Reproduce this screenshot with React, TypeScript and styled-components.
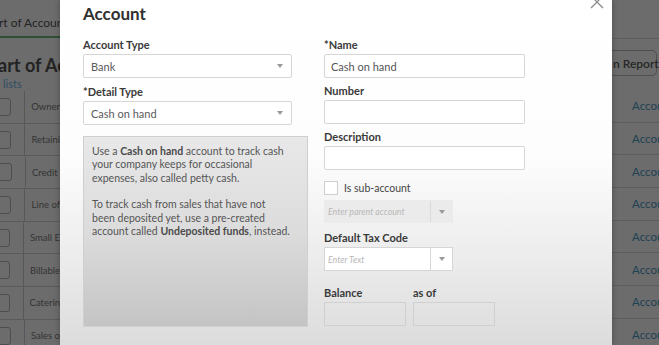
import styled, { createGlobalStyle } from 'styled-components';

const GlobalStyle = createGlobalStyle`
  html, body {
    margin: 0;
    padding: 0;
    background: #6b6b6b;
  }
  * {
    box-sizing: border-box;
  }
`;

const leftRows = ['Owner', 'Retaini', 'Credit', 'Line of', 'Small E', 'Billable', 'Caterin', 'Sales o'];

const Caret = () => (
  <svg width="6" height="4" viewBox="0 0 6 4">
    <path d="M0 0 L6 0 L3 4 Z" fill="#9a9a9a" />
  </svg>
);

const CloseIcon = () => (
  <svg width="14" height="14" viewBox="0 0 14 14">
    <path d="M1 1 L13 13 M13 1 L1 13" stroke="#8a8a8a" strokeWidth="1.3" fill="none" />
  </svg>
);

export default function App() {
  return (
    <Screen>
      <GlobalStyle />
      <LeftPeek>
        <PeekTab>rt of Accoun</PeekTab>
        <PeekTitle>art of Ac</PeekTitle>
        <PeekLink>lists</PeekLink>
        <PeekTable>
          {leftRows.map(r => (
            <PeekRow key={r}>
              <PeekCheck />
              <PeekCell>{r}</PeekCell>
            </PeekRow>
          ))}
        </PeekTable>
      </LeftPeek>

      <Modal>
        <CloseButton>
          <CloseIcon />
        </CloseButton>
        <Title>Account</Title>
        <Columns>
          <Column $gap={8}>
            <Field>
              <Label>Account Type</Label>
              <Select>
                <span>Bank</span>
                <Caret />
              </Select>
            </Field>
            <Field>
              <Label>*Detail Type</Label>
              <Select>
                <span>Cash on hand</span>
                <Caret />
              </Select>
            </Field>
            <InfoBox>
              <p>
                Use a <b>Cash on hand</b> account to track cash
                <br />
                your company keeps for occasional
                <br />
                expenses, also called petty cash.
              </p>
              <p>
                To track cash from sales that have not
                <br />
                been deposited yet, use a pre-created
                <br />
                account called <b>Undeposited funds</b>, instead.
              </p>
            </InfoBox>
          </Column>

          <Column $gap={7}>
            <Field>
              <Label>*Name</Label>
              <Input>Cash on hand</Input>
            </Field>
            <Field>
              <Label>Number</Label>
              <Input />
            </Field>
            <Field>
              <Label>Description</Label>
              <Input />
            </Field>
            <CheckRow>
              <Checkbox />
              <CheckLabel>Is sub-account</CheckLabel>
            </CheckRow>
            <Combo $disabled>
              <ComboText>Enter parent account</ComboText>
              <ComboButton $disabled>
                <Caret />
              </ComboButton>
            </Combo>
            <Field $offset={2}>
              <Label>Default Tax Code</Label>
              <Combo>
                <ComboText>Enter Text</ComboText>
                <ComboButton>
                  <Caret />
                </ComboButton>
              </Combo>
            </Field>
            <BalanceRow>
              <Field>
                <Label>Balance</Label>
                <SmallInput />
              </Field>
              <Field>
                <Label>as of</Label>
                <SmallInput />
              </Field>
            </BalanceRow>
          </Column>
        </Columns>
      </Modal>

      <RightPeek>
        <PeekHeader />
        <ReportButton>n Report</ReportButton>
        <RightTable>
          {Array.from({ length: 8 }).map((_, i) => (
            <RightRow key={i}>Accou</RightRow>
          ))}
        </RightTable>
      </RightPeek>
    </Screen>
  );
}

const Screen = styled.div`
  width: 659px;
  height: 345px;
  display: flex;
  overflow: hidden;
  font-family: Lato, 'Open Sans', sans-serif;
  background: #6c6c6c;
`;

const LeftPeek = styled.div`
  width: 60px;
  flex-shrink: 0;
  display: flex;
  flex-direction: column;
  overflow: hidden;
  white-space: nowrap;
  color: #232323;

  & > * {
    flex-shrink: 0;
  }
`;

const PeekTab = styled.div`
  height: 38px;
  padding-top: 15px;
  font-size: 12px;
  border-bottom: 2px solid #2f4f33;
  margin-left: -1px;
`;

const PeekTitle = styled.div`
  font-size: 18px;
  font-weight: 700;
  margin-top: 17px;
  margin-left: -2px;
  line-height: 20px;
`;

const PeekLink = styled.div`
  font-size: 11px;
  line-height: 14px;
  color: #2c4d63;
  margin-left: 3px;
  margin-top: 2px;
`;

const PeekTable = styled.div`
  margin-top: 0;
  display: flex;
  flex-direction: column;
`;

const PeekRow = styled.div`
  height: 32.7px;
  flex-shrink: 0;
  display: flex;
  align-items: center;
  border-bottom: 1px solid #5a5a5a;
`;

const PeekCheck = styled.div`
  width: 22px;
  height: 18px;
  margin-left: -10px;
  border: 1px solid #4d4d4d;
  border-radius: 3px;
`;

const PeekCell = styled.div`
  height: 100%;
  margin-left: 13px;
  padding-left: 6px;
  border-left: 1px solid #585858;
  display: flex;
  align-items: center;
  font-size: 9.5px;
  color: #333;
`;

const Modal = styled.div`
  position: relative;
  width: 552px;
  flex-shrink: 0;
  padding: 3px 0 0 23px;
  background: linear-gradient(to bottom, #ffffff 0%, #fdfdfd 45%, #ececec 75%, #dcdcdc 100%);
  box-shadow: 0 0 6px rgba(0, 0, 0, 0.3);
  color: #393939;
`;

const CloseButton = styled.div`
  position: absolute;
  top: -7px;
  right: 8px;
`;

const Title = styled.h1`
  margin: 0;
  font-size: 17px;
  font-weight: 700;
  color: #303030;
  line-height: 22px;
`;

const Columns = styled.div`
  display: flex;
  gap: 16px;
  margin-top: 14px;
`;

const Column = styled.div<{ $gap: number }>`
  display: flex;
  flex-direction: column;
  gap: ${p => p.$gap}px;
`;

const Field = styled.div<{ $offset?: number }>`
  display: flex;
  flex-direction: column;
  gap: 3px;
  margin-top: ${p => p.$offset ?? 0}px;
`;

const Label = styled.label`
  font-size: 11px;
  font-weight: 700;
  color: #3a3a3a;
  line-height: 12px;
`;

const Select = styled.div`
  width: 209px;
  height: 24px;
  border: 1px solid #d6d6d6;
  border-radius: 2px;
  background: #fff;
  display: flex;
  align-items: center;
  justify-content: space-between;
  padding: 0 8px 0 7px;
  font-size: 11px;
  color: #5a5a5a;
`;

const InfoBox = styled.div`
  width: 225px;
  height: 191px;
  margin-top: 3px;
  padding: 8px 8px;
  background: linear-gradient(to bottom, #e8e8e8 0%, #dcdcdc 50%, #c4c4c4 100%);
  border: 1px solid #cfcfcf;
  font-size: 10.5px;
  line-height: 13.4px;
  color: #555;
  white-space: nowrap;

  p {
    margin: 0 0 13px;
  }
  b {
    font-weight: 700;
    color: #4a4a4a;
  }
`;

const Input = styled.div`
  width: 201px;
  height: 24px;
  border: 1px solid #d6d6d6;
  border-radius: 2px;
  background: #fff;
  display: flex;
  align-items: center;
  padding: 0 6px;
  font-size: 11px;
  color: #555;
`;

const CheckRow = styled.div`
  display: flex;
  align-items: center;
  gap: 6px;
  margin-top: 4px;
`;

const Checkbox = styled.div`
  width: 14px;
  height: 14px;
  border: 1px solid #cfcfcf;
  background: #fff;
`;

const CheckLabel = styled.span`
  font-size: 10.5px;
  color: #444;
`;

const Combo = styled.div<{ $disabled?: boolean }>`
  width: 129px;
  height: ${p => (p.$disabled ? '23px' : '24px')};
  display: flex;
  border: 1px solid ${p => (p.$disabled ? '#ebebeb' : '#d6d6d6')};
  background: ${p => (p.$disabled ? '#ebebeb' : '#fff')};
  margin-top: ${p => (p.$disabled ? '-2px' : '0')};
`;

const ComboText = styled.div`
  flex: 1;
  display: flex;
  align-items: center;
  padding-left: 3px;
  font-size: 8.8px;
  font-style: italic;
  color: #b8b8b8;
`;

const ComboButton = styled.div<{ $disabled?: boolean }>`
  width: 22px;
  border-left: 1px solid ${p => (p.$disabled ? '#dadada' : '#d6d6d6')};
  display: flex;
  align-items: center;
  justify-content: center;
`;

const BalanceRow = styled.div`
  display: flex;
  gap: 7px;
  margin-top: 9px;
`;

const SmallInput = styled.div`
  width: 82px;
  height: 24px;
  border: 1px solid #d0d0d0;
  background: transparent;
`;

const RightPeek = styled.div`
  flex: 1;
  display: flex;
  flex-direction: column;
  overflow: hidden;
  white-space: nowrap;

  & > * {
    flex-shrink: 0;
  }
`;

const PeekHeader = styled.div`
  height: 39px;
  border-bottom: 1px solid #5e5e5e;
`;

const ReportButton = styled.div`
  margin-top: 11px;
  margin-left: -3px;
  width: 48px;
  height: 26px;
  border: 1px solid #4f4f4f;
  border-radius: 5px;
  display: flex;
  align-items: center;
  padding-left: 3px;
  font-size: 12px;
  font-weight: 600;
  color: #262626;
`;

const RightTable = styled.div`
  margin-top: 14px;
  display: flex;
  flex-direction: column;
`;

const RightRow = styled.div`
  height: 32.7px;
  flex-shrink: 0;
  border-bottom: 1px solid #5e5e5e;
  display: flex;
  align-items: center;
  padding-left: 20px;
  font-size: 11.5px;
  color: #1d4254;
`;
